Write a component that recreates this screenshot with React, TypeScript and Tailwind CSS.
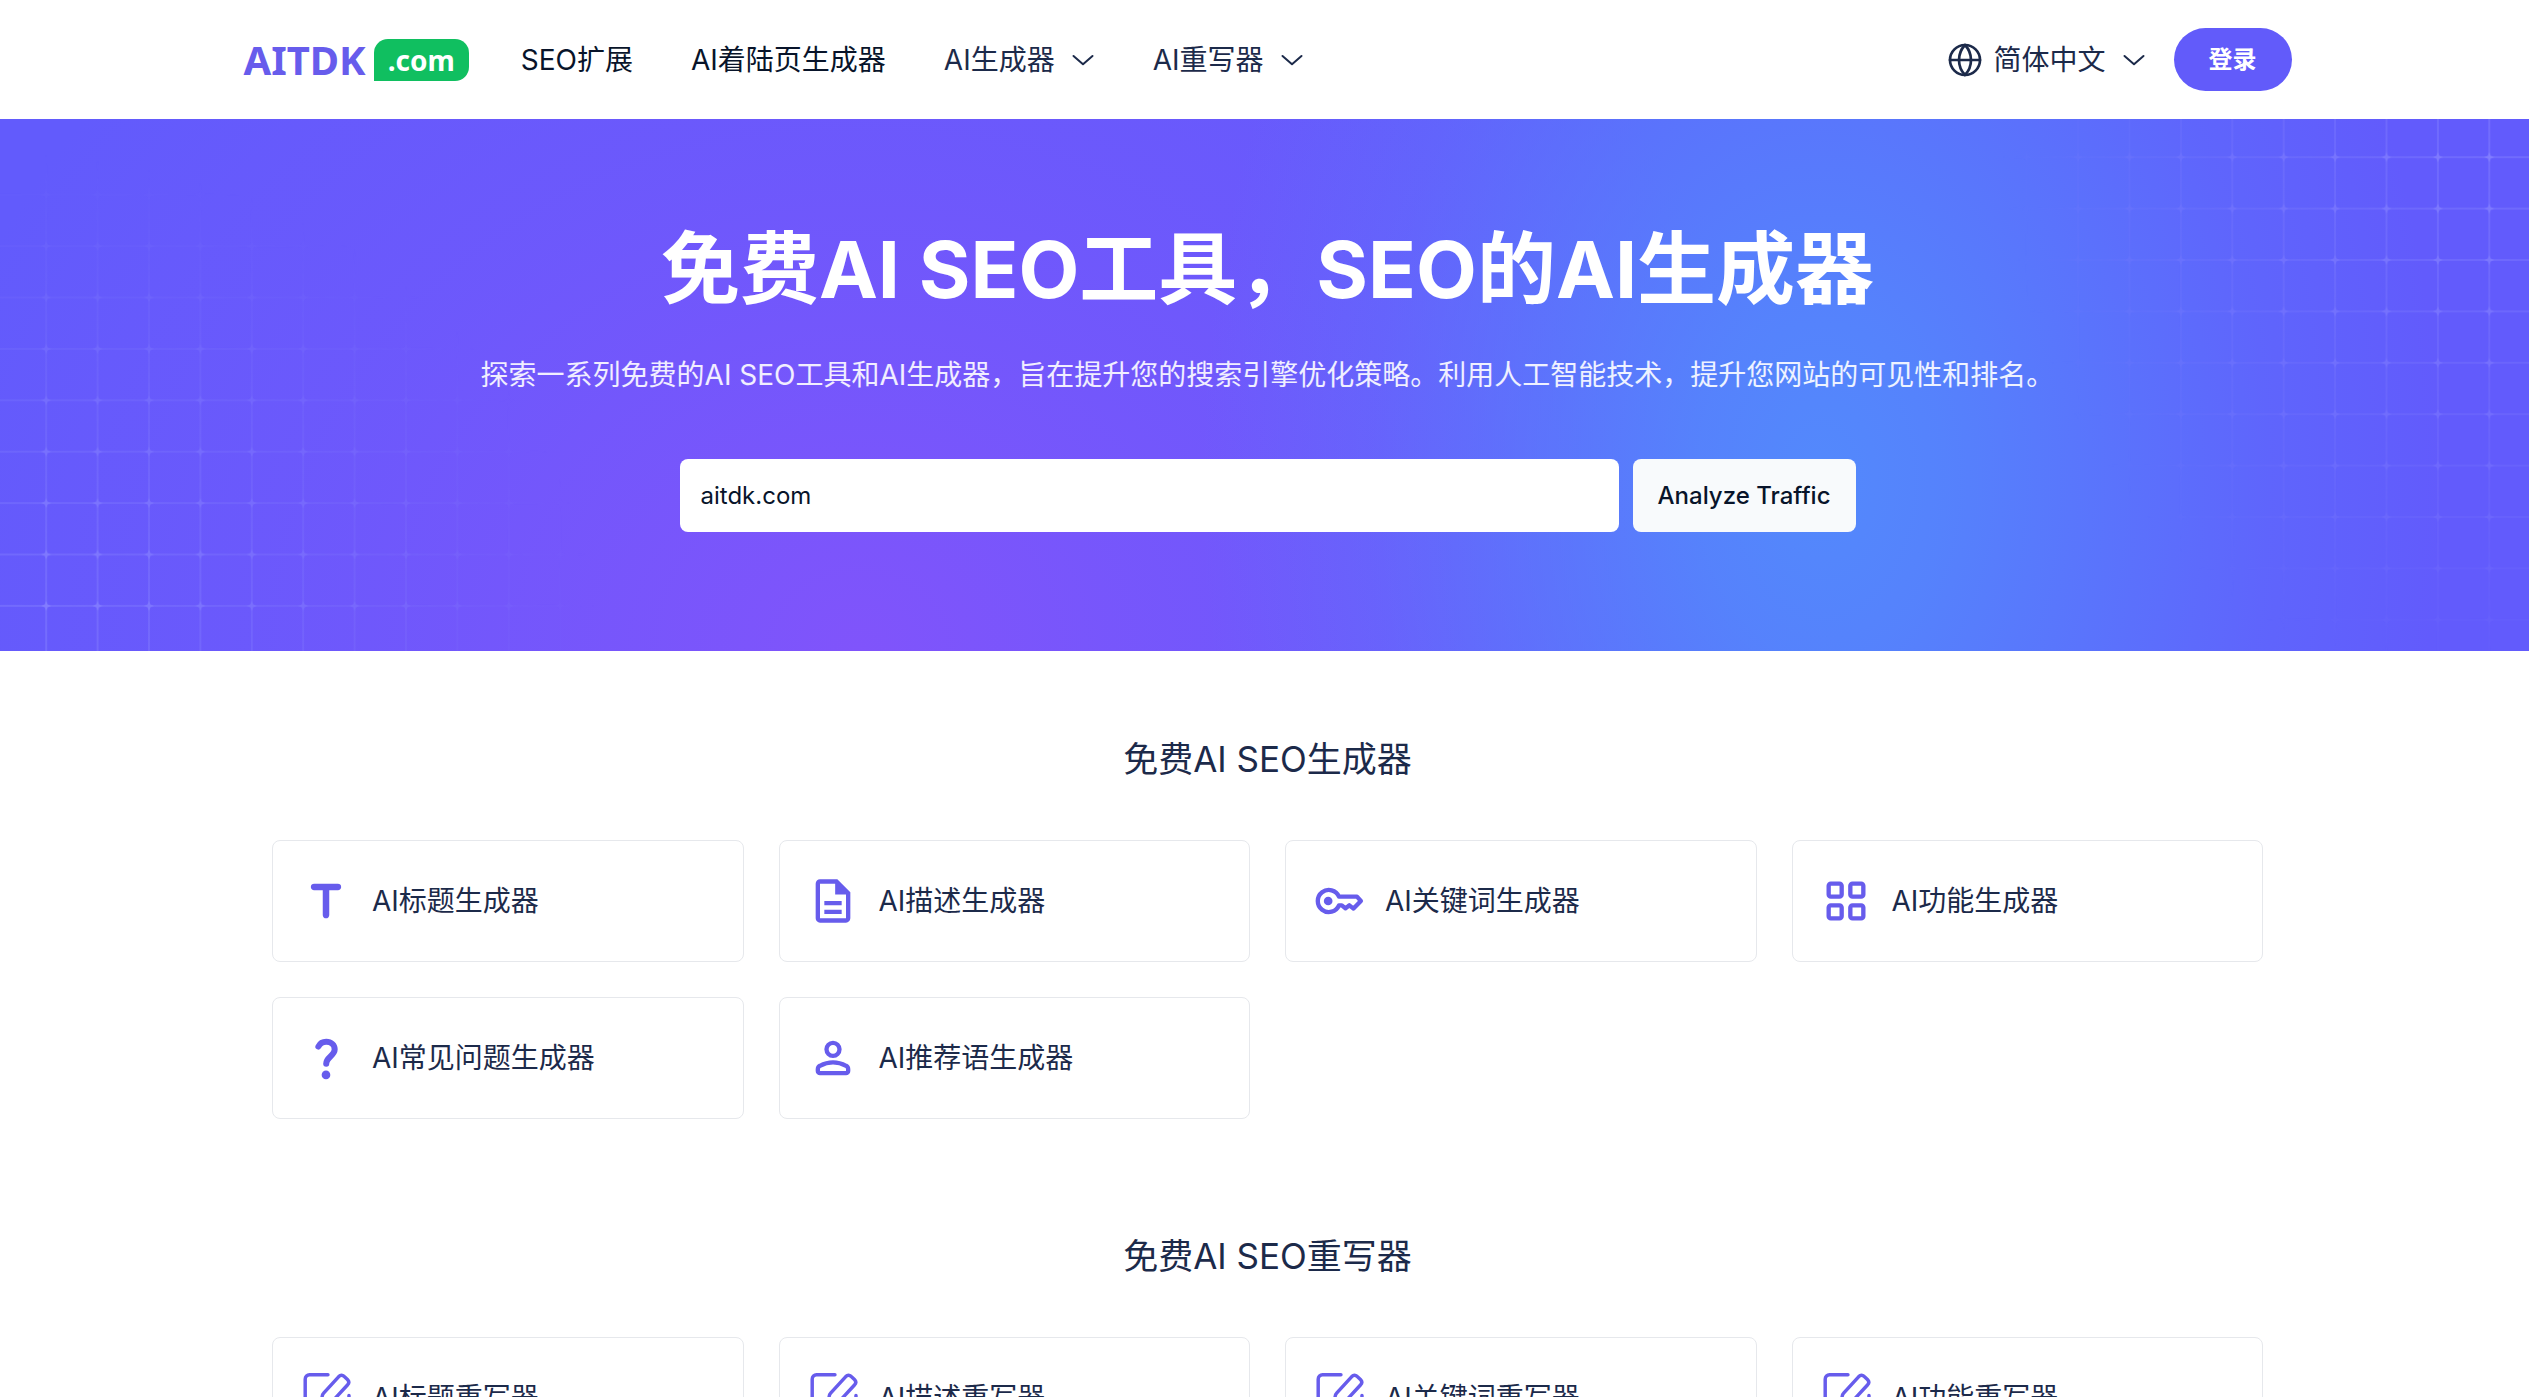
import { Globe } from "lucide-react";
import type { ReactNode } from "react";
import { MdOutlineDescription } from "react-icons/md";

const iconClass = "h-[52px] w-[52px] shrink-0 text-[#675cec]";

function TitleIcon() {
  return (
    <svg viewBox="0 0 24 24" className={iconClass} fill="currentColor" aria-hidden="true">
      <path d="M10.5 7h-4q-.625 0-1.062-.437T5 5.5t.438-1.062T6.5 4h11q.625 0 1.063.438T19 5.5t-.437 1.063T17.5 7h-4v11.5q0 .625-.437 1.063T12 20t-1.062-.437T10.5 18.5z" />
    </svg>
  );
}

function KeyIcon() {
  return (
    <svg viewBox="0 0 24 24" className={iconClass} fill="none" stroke="currentColor" strokeWidth="2" strokeLinejoin="round" aria-hidden="true">
      <path d="M12 10A5.1 5.1 0 1 0 12 14h1.3l1.7 1.4 1.8-1.4 1.9 1.5 3.4-3.5L20.3 10z" />
      <circle cx="7" cy="12" r="2" fill="currentColor" stroke="none" />
    </svg>
  );
}

function GridIcon() {
  return (
    <svg viewBox="0 0 24 24" className={iconClass} fill="none" stroke="currentColor" strokeWidth="2" aria-hidden="true">
      <rect x="4" y="4" width="6" height="6" rx="1" />
      <rect x="14" y="4" width="6" height="6" rx="1" />
      <rect x="4" y="14" width="6" height="6" rx="1" />
      <rect x="14" y="14" width="6" height="6" rx="1" />
    </svg>
  );
}

function QuestionIcon() {
  return (
    <svg viewBox="0 0 24 24" className={iconClass} fill="none" aria-hidden="true">
      <path
        d="M8.5 6.7C9.2 5.3 10.5 4.5 12.1 4.5c2.3 0 3.9 1.5 3.9 3.5 0 3-3.9 3.6-3.9 6.6"
        stroke="currentColor"
        strokeWidth="2.8"
        strokeLinecap="round"
      />
      <circle cx="12" cy="19.8" r="2" fill="currentColor" />
    </svg>
  );
}

function PersonIcon() {
  return (
    <svg viewBox="0 0 24 24" className={iconClass} fill="none" stroke="currentColor" strokeWidth="2" aria-hidden="true">
      <circle cx="12" cy="8" r="3" />
      <path d="M5 18v-.8c0-.7.35-1.3.95-1.6C7.8 14.6 9.9 14 12 14s4.2.6 6.05 1.6c.6.3.95.9.95 1.6v.8a1 1 0 0 1-1 1H6a1 1 0 0 1-1-1z" />
    </svg>
  );
}

function RewriteIcon() {
  return (
    <svg viewBox="0 0 24 24" className={iconClass} fill="none" stroke="currentColor" strokeWidth="1.6" strokeLinecap="round" strokeLinejoin="round" aria-hidden="true">
      <path d="M12.9 1.3H4.4a2 2 0 0 0-2 2v17.4a2 2 0 0 0 2 2h16.2a2 2 0 0 0 2-2V10.8" />
      <path d="M10.2 14.8v-3.4c0-.6.2-1.1.6-1.5l7.1-7.8c.8-.8 1.7-.8 2.4-.1l1.6 1.5c.8.8.8 1.7 0 2.5l-7.2 7.8c-.4.4-.8.6-1.4.7z" />
    </svg>
  );
}

type Tool = { name: string; icon: ReactNode };

const generators: Tool[] = [
  { name: "AI标题生成器", icon: <TitleIcon /> },
  { name: "AI描述生成器", icon: <MdOutlineDescription className={iconClass} /> },
  { name: "AI关键词生成器", icon: <KeyIcon /> },
  { name: "AI功能生成器", icon: <GridIcon /> },
  { name: "AI常见问题生成器", icon: <QuestionIcon /> },
  { name: "AI推荐语生成器", icon: <PersonIcon /> },
];

const rewriters: Tool[] = [
  { name: "AI标题重写器", icon: <RewriteIcon /> },
  { name: "AI描述重写器", icon: <RewriteIcon /> },
  { name: "AI关键词重写器", icon: <RewriteIcon /> },
  { name: "AI功能重写器", icon: <RewriteIcon /> },
];

function Chevron() {
  return (
    <svg viewBox="0 0 24 12" className="h-3 w-6" fill="none" stroke="currentColor" strokeWidth="2" strokeLinecap="round" strokeLinejoin="round" aria-hidden="true">
      <path d="M2.5 2 12 10.3 21.5 2" />
    </svg>
  );
}

function Header() {
  return (
    <header className="bg-white pl-1.5">
      <div className="mx-auto flex h-[119px] w-full max-w-[2048px] items-center justify-between text-[28px]">
        <div className="flex items-center">
          <a href="#" className="flex items-center gap-2 font-['Noto_Sans'] font-bold">
            <span className="text-[40px] leading-10 text-[#675cec]">AITDK</span>
            <span className="flex h-[42px] items-center rounded-[14px] rounded-bl-none bg-[#10bf60] px-3.5 text-[28px] leading-7 text-white">
              .com
            </span>
          </a>
          <nav className="ml-[52px] flex items-center gap-[58px] text-[#1c2a4a]">
            <a href="#" className="text-[#08142a]">SEO扩展</a>
            <a href="#" className="text-[#08142a]">AI着陆页生成器</a>
            <button type="button" className="flex items-center gap-4">
              AI生成器
              <Chevron />
            </button>
            <button type="button" className="flex items-center gap-4">
              AI重写器
              <Chevron />
            </button>
          </nav>
        </div>
        <div className="flex items-center gap-7 text-[#1c2a4a]">
          <button type="button" className="flex items-center">
            <Globe className="mr-2.5 h-9 w-9" strokeWidth={1.8} />
            <span className="mr-4">简体中文</span>
            <Chevron />
          </button>
          <button type="button" className="h-[63px] rounded-full bg-[#625bfa] px-[35px] text-2xl font-bold text-white">
            登录
          </button>
        </div>
      </div>
    </header>
  );
}

function GridPattern({ id, x, y, className }: { id: string; x: number; y: number; className: string }) {
  return (
    <svg className={className} aria-hidden="true">
      <defs>
        <pattern id={id} x={x} y={y} width="51.4" height="51.4" patternUnits="userSpaceOnUse">
          <path d="M25.7 0V51.4M0 25.7H51.4" stroke="#8a86ff" strokeWidth="1.6" opacity="0.55" />
          <path d="M25.7 20.7l1.5 3.5 3.5 1.5-3.5 1.5-1.5 3.5-1.5-3.5-3.5-1.5 3.5-1.5z" fill="#8a86ff" opacity="0.75" />
        </pattern>
      </defs>
      <rect width="100%" height="100%" fill={`url(#${id})`} />
    </svg>
  );
}

function Hero() {
  return (
    <section className="relative overflow-hidden bg-[#625bfc] bg-[radial-gradient(ellipse_620px_900px_at_72%_68%,#5389fc_0%,#5389fcd9_20%,#5389fc8c_45%,#5389fc38_72%,transparent_100%),radial-gradient(ellipse_980px_880px_at_34%_100%,#8054fb_0%,#8054fba6_30%,#8054fb4d_62%,transparent_100%)] pl-1.5 text-white">
      <GridPattern
        id="grid-left"
        x={20.5}
        y={-1.4}
        className="absolute bottom-0 left-0 h-full w-[620px] [mask-image:radial-gradient(ellipse_600px_500px_at_0%_100%,black_0%,transparent_100%)]"
      />
      <GridPattern
        id="grid-right"
        x={32}
        y={12.5}
        className="absolute right-0 top-0 h-full w-[560px] [mask-image:radial-gradient(ellipse_530px_580px_at_100%_0%,black_0%,transparent_100%)]"
      />
      <div className="relative flex flex-col items-center pb-[119px] pt-[100px]">
        <h1 className="text-[79px] font-bold leading-[100px]">免费AI SEO工具，SEO的AI生成器</h1>
        <p className="mt-9 text-[28px] leading-10 text-white/90">
          探索一系列免费的AI SEO工具和AI生成器，旨在提升您的搜索引擎优化策略。利用人工智能技术，提升您网站的可见性和排名。
        </p>
        <form className="mt-16 flex w-full max-w-[1176px] gap-3.5 text-2xl text-[#08142a]" onSubmit={(e) => e.preventDefault()}>
          <input
            type="text"
            aria-label="Domain"
            defaultValue="aitdk.com"
            className="h-[73px] min-w-0 flex-1 rounded-lg bg-white px-[21px] outline-none"
          />
          <button type="submit" className="h-[73px] rounded-lg bg-[#f8fafc] px-[25px] font-medium">
            Analyze Traffic
          </button>
        </form>
      </div>
    </section>
  );
}

function ToolSection({ title, tools }: { title: string; tools: Tool[] }) {
  return (
    <section className="flex flex-col gap-[55px]">
      <h2 className="text-center text-[35px] leading-[52px]">{title}</h2>
      <div className="grid grid-cols-4 gap-[35px]">
        {tools.map((tool) => (
          <a
            key={tool.name}
            href="#"
            className="flex h-[122px] items-center gap-5 rounded-lg border border-[#e6e8ec] bg-white px-[27px] text-[28px]"
          >
            {tool.icon}
            {tool.name}
          </a>
        ))}
      </div>
    </section>
  );
}

export default function App() {
  return (
    <div lang="zh-CN" className="min-h-screen bg-white font-['Inter','Noto_Sans_CJK_SC',sans-serif] text-[#1c2a4a]">
      <Header />
      <Hero />
      <main className="pl-1.5 pt-[82px]">
        <div className="mx-auto flex w-full max-w-[1991px] flex-col gap-[111px]">
          <ToolSection title="免费AI SEO生成器" tools={generators} />
          <ToolSection title="免费AI SEO重写器" tools={rewriters} />
        </div>
      </main>
    </div>
  );
}
